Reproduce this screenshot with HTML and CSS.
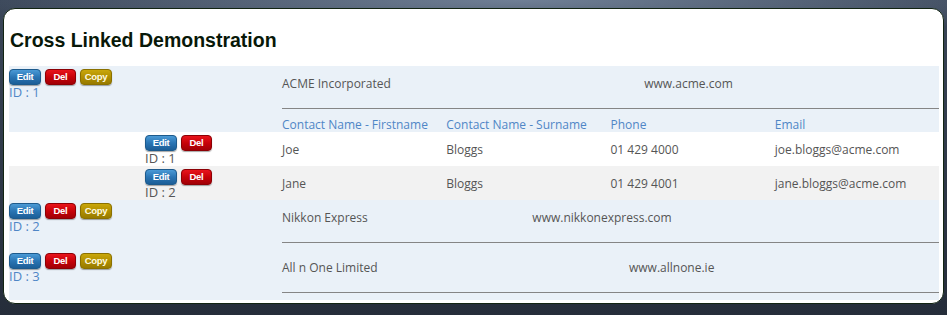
FILE: index.html
```html
<!DOCTYPE html>
<html lang="en">
<head>
    <meta charset="UTF-8">
    <meta name="viewport" content="width=device-width, initial-scale=1.0">
    <title>Cross Linked Demonstration</title>
    <link rel="stylesheet" href="styles.css">
</head>
<body>
    <div class="panel">
        <h1 class="title">Cross Linked Demonstration</h1>

        <table class="grid">
            <!-- Компания 1 -->
            <tr class="company">
                <td class="actions">
                    <div class="buttons">
                        <span class="btn btn-edit">Edit</span>
                        <span class="btn btn-del">Del</span>
                        <span class="btn btn-copy">Copy</span>
                    </div>
                    <div class="id">ID : 1</div>
                </td>
                <td class="detail">
                    <table class="company-info">
                        <tr>
                            <td>ACME Incorporated</td>
                            <td>www.acme.com</td>
                        </tr>
                    </table>
                    <hr class="rule">
                    <table class="contacts">
                        <tr>
                            <th>Contact Name - Firstname</th>
                            <th>Contact Name - Surname</th>
                            <th>Phone</th>
                            <th>Email</th>
                        </tr>
                    </table>
                </td>
            </tr>
            <tr class="contact">
                <td class="actions sub">
                    <div class="buttons">
                        <span class="btn btn-edit">Edit</span>
                        <span class="btn btn-del">Del</span>
                    </div>
                    <div class="id">ID : 1</div>
                </td>
                <td class="detail">
                    <table class="contacts">
                        <tr>
                            <td>Joe</td>
                            <td>Bloggs</td>
                            <td>01 429 4000</td>
                            <td>joe.bloggs@acme.com</td>
                        </tr>
                    </table>
                </td>
            </tr>
            <tr class="contact alt">
                <td class="actions sub">
                    <div class="buttons">
                        <span class="btn btn-edit">Edit</span>
                        <span class="btn btn-del">Del</span>
                    </div>
                    <div class="id">ID : 2</div>
                </td>
                <td class="detail">
                    <table class="contacts">
                        <tr>
                            <td>Jane</td>
                            <td>Bloggs</td>
                            <td>01 429 4001</td>
                            <td>jane.bloggs@acme.com</td>
                        </tr>
                    </table>
                </td>
            </tr>

            <!-- Компания 2 -->
            <tr class="company">
                <td class="actions">
                    <div class="buttons">
                        <span class="btn btn-edit">Edit</span>
                        <span class="btn btn-del">Del</span>
                        <span class="btn btn-copy">Copy</span>
                    </div>
                    <div class="id">ID : 2</div>
                </td>
                <td class="detail">
                    <table class="company-info">
                        <tr>
                            <td>Nikkon Express</td>
                            <td>www.nikkonexpress.com</td>
                        </tr>
                    </table>
                    <hr class="rule">
                </td>
            </tr>

            <!-- Компания 3 -->
            <tr class="company">
                <td class="actions">
                    <div class="buttons">
                        <span class="btn btn-edit">Edit</span>
                        <span class="btn btn-del">Del</span>
                        <span class="btn btn-copy">Copy</span>
                    </div>
                    <div class="id">ID : 3</div>
                </td>
                <td class="detail">
                    <table class="company-info">
                        <tr>
                            <td>All n One Limited</td>
                            <td>www.allnone.ie</td>
                        </tr>
                    </table>
                    <hr class="rule">
                </td>
            </tr>
        </table>
    </div>
</body>
</html>
```

FILE: styles.css
```css
body {
    margin: 0;
    padding: 8px 3px 0;
    height: 307px;
    font-family: 'Open Sans', Arial, sans-serif;
    font-size: 12px;
    line-height: 15px;
    color: #555;
    background: radial-gradient(ellipse 60% 40px at 55% 0, #6f7f95, rgba(60, 72, 90, 0) 100%),
                linear-gradient(#3a4658, #252d3a);
}
.panel {
    background: #fff;
    border: 1px solid #122412;
    border-radius: 12px;
    padding: 0 4px 3px 5px;
}
.title {
    font-family: 'Liberation Sans', Arial, sans-serif;
    font-weight: 700;
    font-size: 19.5px;
    line-height: 24px;
    color: #081808;
    margin: 19px 0 14px 1px;
}
.grid {
    width: 100%;
    border-collapse: collapse;
}
.grid > tbody > tr > td {
    padding: 0;
    vertical-align: top;
}
.company {
    background: #eaf1f8;
}
.contact {
    background: #fff;
}
.contact.alt {
    background: #f2f2f2;
}
.actions {
    width: 273px;
    padding-top: 3px !important;
}
.actions.sub {
    padding-left: 136px !important;
    width: 137px;
}
.buttons {
    display: flex;
    gap: 4px;
    height: 16px;
}
.btn {
    width: 32px;
    height: 16px;
    line-height: 14px;
    border-radius: 4px;
    text-align: center;
    font-family: 'Liberation Sans', Arial, sans-serif;
    font-weight: 700;
    font-size: 9.5px;
    letter-spacing: -0.3px;
    color: #fff;
    box-sizing: border-box;
    box-shadow: 0 1px 1px rgba(0, 0, 0, 0.35);
}
.btn-edit {
    background: linear-gradient(#4a9ad6, #2a75b4 50%, #1c5e97);
    border: 1px solid #1d5a8c;
}
.btn-del {
    width: 31px;
    background: linear-gradient(#e8141c, #c70209 50%, #a10006);
    border: 1px solid #8c0005;
}
.btn-copy {
    background: linear-gradient(#c9a70a, #b18f00 50%, #977a00);
    border: 1px solid #8a7000;
    color: #fffbe0;
}
.id {
    color: #4f86c6;
    font-size: 13px;
}
.sub .id {
    color: #555;
}
.company-info {
    width: 100%;
    border-collapse: collapse;
}
.company-info td {
    padding: 0;
    height: 34px;
    vertical-align: middle;
    white-space: nowrap;
}
.rule {
    border: 0;
    border-top: 1px solid #858585;
    margin: 8px 0 7px;
}
.contacts {
    width: 100%;
    table-layout: fixed;
    border-collapse: collapse;
}
.contacts th {
    font-weight: 400;
    text-align: left;
    color: #4f86c6;
    padding: 0;
    height: 16px;
    white-space: nowrap;
}
.contacts td {
    padding: 0;
    height: 34px;
    vertical-align: middle;
    white-space: nowrap;
}
```
